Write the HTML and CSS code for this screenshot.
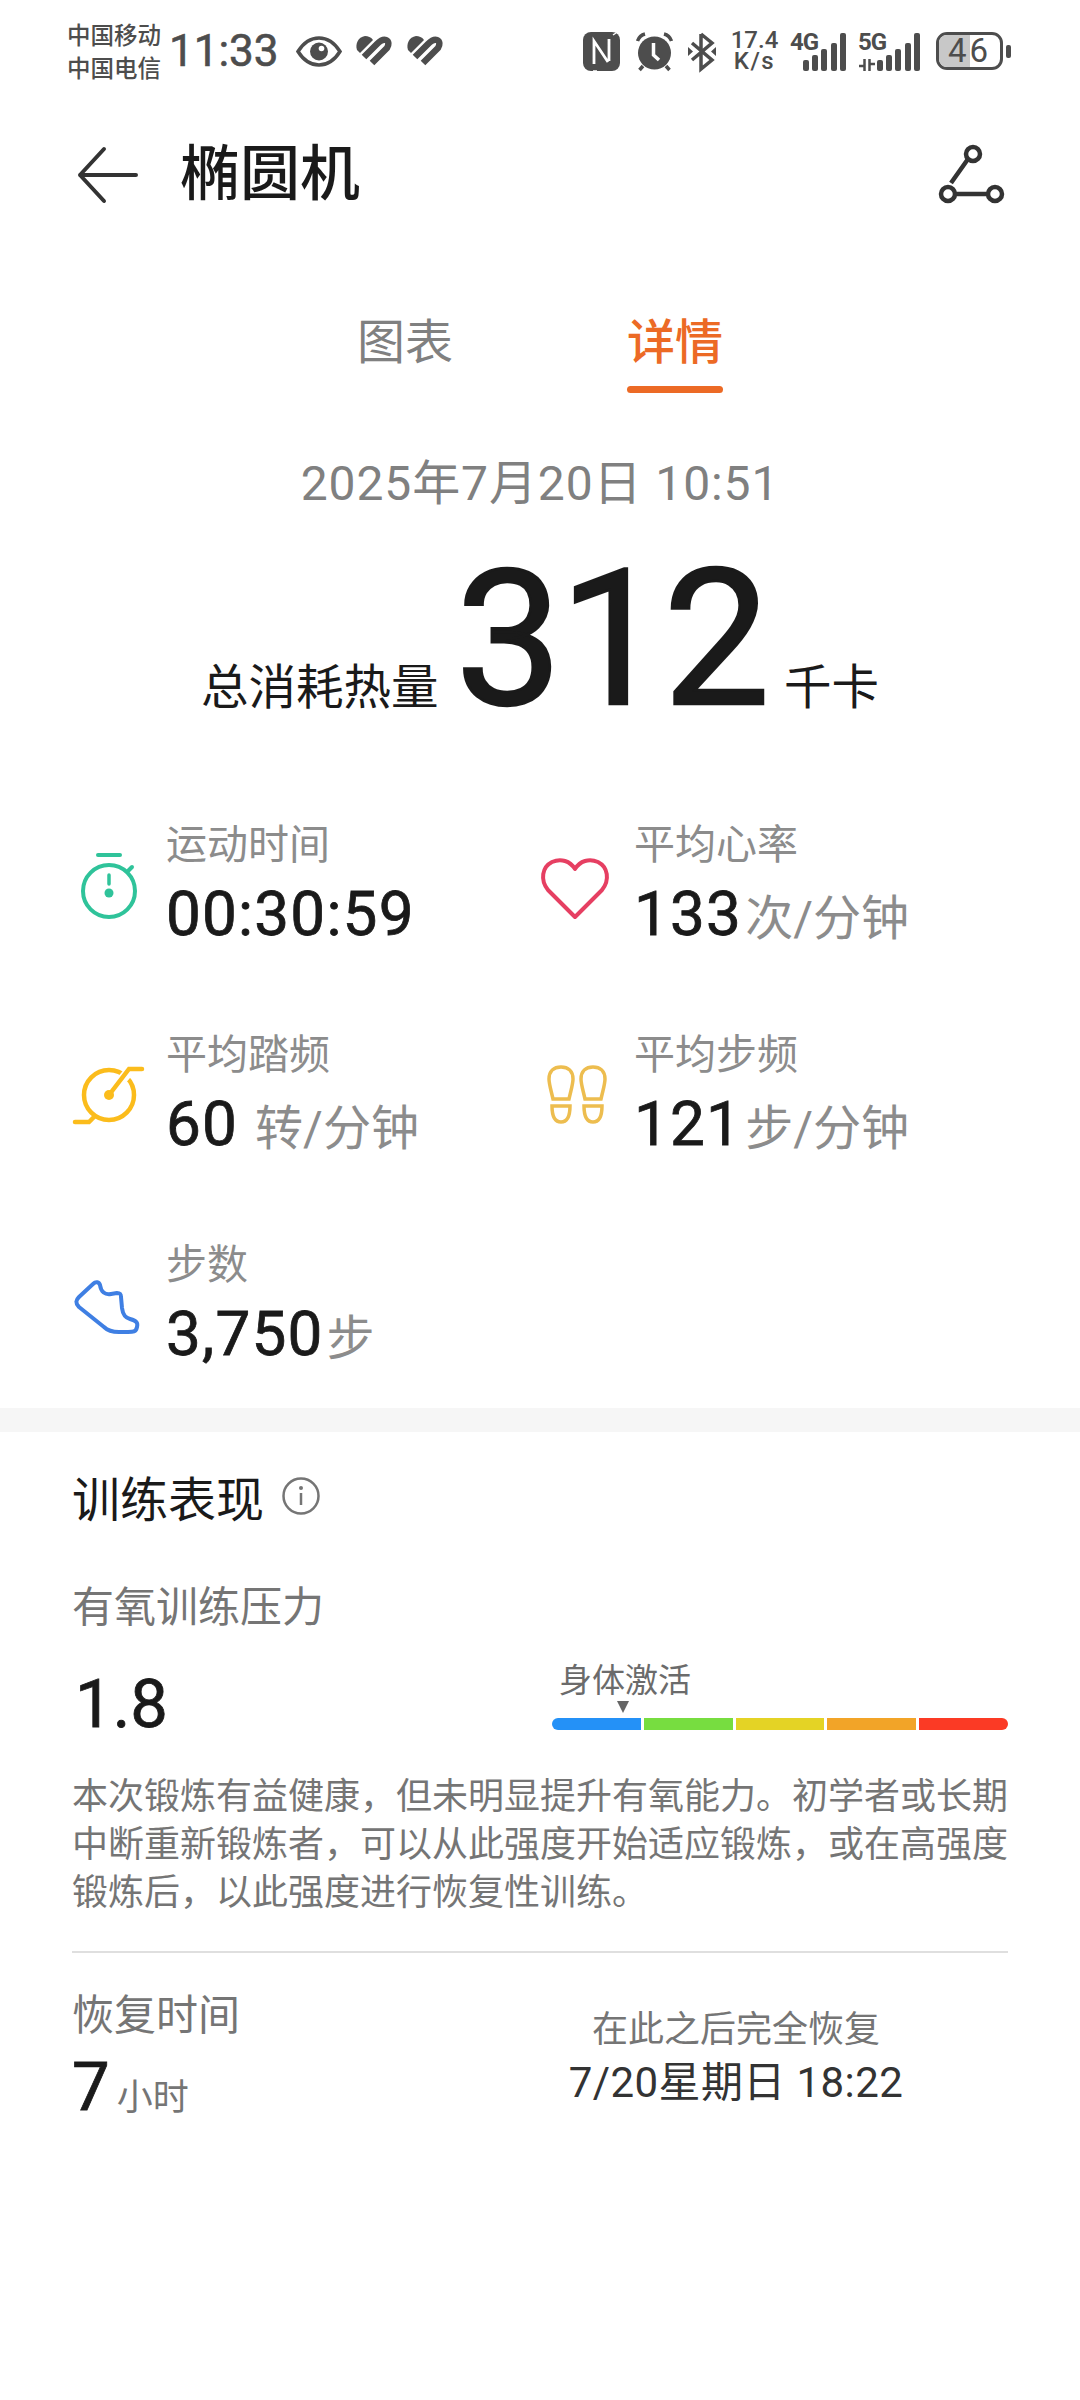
FILE: index.html
```html
<!DOCTYPE html>
<html lang="zh-CN">
<head>
    <meta charset="UTF-8">
    <meta name="viewport" content="width=device-width, initial-scale=1.0">
    <title>椭圆机</title>
    <link rel="stylesheet" href="styles.css">
</head>
<body>
    <div class="status-bar">
        <div class="status-left">
            <div class="carriers"><span>中国移动</span><span>中国电信</span></div>
            <span class="clock">11:33</span>
            <svg class="st-eye" viewBox="0 0 46 31"><path d="M2 15.500C8 6 14 2 23 2S38 6 44 15.500C38 25 32 29 23 29S8 25 2 15.500Z" fill="none" stroke="#4d4d4d" stroke-width="3.500"/><circle cx="23" cy="15.500" r="9" fill="#4d4d4d"/><circle cx="25.500" cy="12.500" r="2.800" fill="#fff"/></svg>
            <svg class="st-heart" viewBox="0 0 37 30"><path d="M1 14C-1 8 2 1 9 0C12 0 15 1 17 4L4 17Z" fill="#4d4d4d"/><path d="M8 21L21 8C24 5 27 3 30 4C33 5 33 9 31 12L16 27" fill="none" stroke="#4d4d4d" stroke-width="6.500"/></svg>
            <svg class="st-heart" viewBox="0 0 37 30"><path d="M1 14C-1 8 2 1 9 0C12 0 15 1 17 4L4 17Z" fill="#4d4d4d"/><path d="M8 21L21 8C24 5 27 3 30 4C33 5 33 9 31 12L16 27" fill="none" stroke="#4d4d4d" stroke-width="6.500"/></svg>
        </div>
        <div class="status-right">
            <svg class="st-nfc" viewBox="0 0 37 39"><rect width="37" height="39" rx="8" fill="#4d4d4d"/><path d="M11 32V9L25 30M26 7V29" fill="none" stroke="#fff" stroke-width="2.800"/><path d="M10 39H14M33 1L30 3" stroke="#fff" stroke-width="1.500"/></svg>
            <svg class="st-alarm" viewBox="0 0 37 39"><circle cx="18.500" cy="21" r="16.500" fill="#4d4d4d"/><path d="M1.500 9C3 5 5 3 9 2M35.500 9C34 5 32 3 28 2M7 34L3.500 38M30 34L33.500 38" fill="none" stroke="#4d4d4d" stroke-width="3.500"/><path d="M17.500 11V23L23 28" fill="none" stroke="#fff" stroke-width="3.500"/></svg>
            <svg class="st-bt" viewBox="0 0 28 39"><path d="M13 2V37L24 28L4 11M13 2L24 11L4 28" fill="none" stroke="#4d4d4d" stroke-width="3.500"/><path d="M0 15L5 19.500L0 24ZM28 15L23 19.500L28 24Z" fill="#4d4d4d"/></svg>
            <div class="speed"><span>17.4</span><span>K/s</span></div>
            <div class="signal">
                <span class="net">4G</span>
                <div class="bars"><i class="b1"></i><i class="b2"></i><i class="b3"></i><i class="b4"></i><i class="b5"></i></div>
            </div>
            <div class="signal five">
                <span class="net">5G</span>
                <svg class="arrows" viewBox="0 0 16 12"><path d="M5.500 0V12M0 7H5.500M10.500 0V12M10.500 5H16" fill="none" stroke="#4d4d4d" stroke-width="2.500"/></svg>
                <div class="bars"><i class="b1"></i><i class="b2"></i><i class="b3"></i><i class="b4"></i><i class="b5"></i></div>
            </div>
            <div class="battery"><div class="battery-body"><div class="battery-fill"></div><span>46</span></div><i class="battery-cap"></i></div>
        </div>
    </div>

    <div class="title-bar">
        <svg class="back" viewBox="0 0 60 56"><path d="M26 2L2 28L26 54M2 28H58" fill="none" stroke="#333" stroke-width="4" stroke-linecap="round" stroke-linejoin="round"/></svg>
        <h1>椭圆机</h1>
        <svg class="route" viewBox="0 0 66 60"><path d="M29 14L12 38M16 49H50" fill="none" stroke="#333" stroke-width="4.500"/><circle cx="34" cy="9" r="7" fill="none" stroke="#333" stroke-width="4.500"/><circle cx="9" cy="49" r="7" fill="none" stroke="#333" stroke-width="4.500"/><circle cx="56" cy="49" r="7" fill="none" stroke="#333" stroke-width="4.500"/></svg>
    </div>

    <div class="tabs">
        <div class="tab">图表</div>
        <div class="tab active">详情</div>
    </div>

    <div class="date">2025年7月20日 10:51</div>
    <div class="hero">
        <span class="hero-label">总消耗热量</span>
        <span class="hero-num">312</span>
        <span class="hero-label">千卡</span>
    </div>

    <div class="metrics">
        <div class="metric">
            <svg class="metric-icon" viewBox="0 0 70 70"><path d="M25 3H47" fill="none" stroke="#2fc39a" stroke-width="4" stroke-linecap="round"/><circle cx="36" cy="39" r="26" fill="none" stroke="#2fc39a" stroke-width="4"/><path d="M36 23V32" stroke="#2fc39a" stroke-width="3.500" stroke-linecap="round"/><circle cx="36" cy="41" r="4.500" fill="#2fc39a"/><path d="M55 19L59 15" stroke="#2fc39a" stroke-width="4" stroke-linecap="round"/></svg>
            <div>
                <div class="metric-label">运动时间</div>
                <div class="metric-value">00:30:59</div>
            </div>
        </div>
        <div class="metric">
            <svg class="metric-icon" viewBox="0 0 70 70"><path d="M34 65L7 38C-1 28 1 15 11 10C20 6 29 9 34 17C39 9 48 6 57 10C67 15 69 28 61 38Z" fill="none" stroke="#e63f62" stroke-width="4" stroke-linejoin="round"/></svg>
            <div>
                <div class="metric-label">平均心率</div>
                <div class="metric-value">133<span class="unit">次/分钟</span></div>
            </div>
        </div>
        <div class="metric">
            <svg class="metric-icon" viewBox="0 0 70 70"><circle cx="36" cy="33" r="25" fill="none" stroke="#fbbc1c" stroke-width="4.500"/><path d="M36 33L58 7M2 60H16" fill="none" stroke="#fff" stroke-width="10"/><path d="M36 33L56 7H69M2 60H16L21 55" fill="none" stroke="#fbbc1c" stroke-width="4.500" stroke-linecap="round"/><circle cx="36" cy="33" r="5" fill="#fbbc1c"/></svg>
            <div>
                <div class="metric-label">平均踏频</div>
                <div class="metric-value">60<span class="unit wide">转/分钟</span></div>
            </div>
        </div>
        <div class="metric">
            <svg class="metric-icon" viewBox="0 0 70 70"><g fill="none" stroke="#edbd4f" stroke-width="3.500"><path d="M12 37C10 28 8 22 8 17C8 9 13 5 20 5C27 5 32 9 32 17C32 22 30 28 28 37Z"/><path d="M11 44H29C29 54 26 60 20 60C14 60 11 54 11 44Z"/><path d="M44 37C42 28 40 22 40 17C40 9 45 5 52 5C59 5 64 9 64 17C64 22 62 28 60 37Z"/><path d="M43 44H61C61 54 58 60 52 60C46 60 43 54 43 44Z"/></g></svg>
            <div>
                <div class="metric-label">平均步频</div>
                <div class="metric-value">121<span class="unit">步/分钟</span></div>
            </div>
        </div>
        <div class="metric">
            <svg class="metric-icon" viewBox="0 0 70 70"><path d="M6 25L20 12C23 9 26 10 27 13C28 20 32 23 38 22L44 21C48 21 48 23 48 25L49 36C50 44 53 46 57 47C64 49 65 51 64 55C63 60 60 60 55 60H46C38 60 34 58 31 55L6 35C2 31 3 28 6 25Z" fill="none" stroke="#3f7fe3" stroke-width="4" stroke-linejoin="round"/></svg>
            <div>
                <div class="metric-label">步数</div>
                <div class="metric-value">3,750<span class="unit">步</span></div>
            </div>
        </div>
    </div>

    <div class="gap-band"></div>

    <div class="section">
        <div class="section-title">
            <h2>训练表现</h2>
            <svg class="info" viewBox="0 0 38 38"><circle cx="19" cy="19" r="17.500" fill="none" stroke="#757575" stroke-width="2.500"/><circle cx="19" cy="11" r="2" fill="#757575"/><path d="M19 16V28" stroke="#757575" stroke-width="2.500"/></svg>
        </div>
        <div class="sub-label">有氧训练压力</div>
        <div class="load-row">
            <div class="load-value">1.8</div>
            <div class="load-scale">
                <div class="scale-label">身体激活</div>
                <div class="scale-arrow"></div>
                <div class="scale-bar">
                    <i class="c-blue"></i><i class="c-green"></i><i class="c-yellow"></i><i class="c-orange"></i><i class="c-red"></i>
                </div>
            </div>
        </div>
        <p class="desc">本次锻炼有益健康，但未明显提升有氧能力。初学者或长期中断重新锻炼者，可以从此强度开始适应锻炼，或在高强度锻炼后，以此强度进行恢复性训练。</p>
        <div class="recovery">
            <div class="recovery-left">
                <div class="sub-label">恢复时间</div>
                <div class="recovery-value"><span class="load-value">7</span><span class="hours">小时</span></div>
            </div>
            <div class="recovery-right">
                <div class="recovery-note">在此之后完全恢复</div>
                <div class="recovery-time">7/20星期日 18:22</div>
            </div>
        </div>
    </div>
</body>
</html>
```

FILE: styles.css
```css
body {
    margin: 0;
    width: 1080px;
    height: 2400px;
    overflow: hidden;
    background: #fff;
    font-family: Roboto, "Noto Sans CJK SC", sans-serif;
    color: #1a1a1a;
}
h1, h2, p {
    margin: 0;
    font-weight: 400;
}
svg {
    display: block;
    flex: none;
    overflow: visible;
}

/* status bar */
.status-bar {
    height: 100px;
    box-sizing: border-box;
    padding: 20px 69px 0 67px;
    display: flex;
    justify-content: space-between;
    align-items: flex-start;
    color: #4d4d4d;
}
.status-left, .status-right {
    display: flex;
    align-items: center;
    height: 62px;
}
.carriers {
    display: flex;
    flex-direction: column;
    font-size: 23.500px;
    line-height: 33px;
    font-weight: 500;
    width: 96px;
    padding-top: 3px;
}
.clock {
    font-size: 44px;
    margin-left: 6px;
    width: 127px;
    -webkit-text-stroke: 0.600px #4d4d4d;
}
.st-eye { width: 46px; height: 31px; }
.st-heart { width: 37px; height: 30px; margin-left: 14px; }
.st-nfc { width: 37px; height: 39px; }
.st-alarm { width: 37px; height: 39px; margin-left: 16px; }
.st-bt { width: 28px; height: 39px; margin-left: 15px; }
.speed {
    display: flex;
    flex-direction: column;
    align-items: center;
    width: 49px;
    margin-left: 14px;
    font-size: 24px;
    line-height: 21px;
    font-weight: 500;
}
.speed span:last-child {
    letter-spacing: 1.500px;
}
.signal {
    position: relative;
    display: flex;
    align-items: flex-end;
    height: 39px;
    width: 56px;
    justify-content: flex-end;
    margin-left: 11px;
}
.signal.five {
    width: 62px;
    margin-left: 12px;
}
.net {
    position: absolute;
    left: 0;
    top: -2px;
    font-size: 24px;
    line-height: 24px;
    font-weight: 700;
    letter-spacing: -1px;
}
.arrows {
    position: absolute;
    left: 1px;
    bottom: 0;
    width: 16px;
    height: 12px;
}
.bars {
    display: flex;
    align-items: flex-end;
    gap: 3.300px;
}
.bars i {
    display: block;
    width: 6px;
    border-radius: 2px;
    background: #4d4d4d;
}
.bars .b1 { height: 11px; }
.bars .b2 { height: 16px; }
.bars .b3 { height: 22px; }
.bars .b4 { height: 28px; }
.bars .b5 { height: 38px; }
.battery {
    display: flex;
    align-items: center;
    margin-left: 16px;
}
.battery-body {
    position: relative;
    width: 67px;
    height: 38px;
    box-sizing: border-box;
    border: 3px solid #4d4d4d;
    border-radius: 11px;
    overflow: hidden;
    text-align: center;
}
.battery-fill {
    position: absolute;
    left: 0;
    top: 0;
    bottom: 0;
    width: 50%;
    background: #c8c8c8;
}
.battery-body span {
    position: relative;
    display: block;
    font-size: 33px;
    line-height: 32px;
    letter-spacing: 3px;
}
.battery-cap {
    display: block;
    width: 5px;
    height: 13px;
    margin-left: 3px;
    border-radius: 2px;
    background: #4d4d4d;
}

/* title */
.title-bar {
    height: 150px;
    display: flex;
    align-items: center;
    padding: 0 32px 0 78px;
}
.back { width: 60px; height: 56px; }
.title-bar h1 {
    margin: 0 0 14px 42px;
    font-size: 60px;
    font-weight: 500;
    flex: 1;
}
.route { width: 66px; height: 60px; margin-right: 43px; }

/* tabs */
.tabs {
    display: flex;
    justify-content: center;
    gap: 174px;
    height: 143px;
}
.tab {
    font-size: 48px;
    line-height: 60px;
    padding-top: 63px;
    color: #808080;
    position: relative;
    height: 80px;
}
.tab.active {
    color: #ec6a25;
    font-weight: 500;
}
.tab.active::after {
    content: "";
    position: absolute;
    left: 0;
    right: 0;
    bottom: 0;
    height: 7px;
    border-radius: 4px;
    background: #ec6a25;
}

/* summary */
.date {
    text-align: center;
    font-size: 48px;
    line-height: 60px;
    letter-spacing: 0.900px;
    color: #808080;
    padding-top: 61px;
}
.hero {
    display: flex;
    justify-content: center;
    align-items: baseline;
    height: 238px;
    padding-top: 30px;
}
.hero-num {
    font-size: 190px;
    line-height: 190px;
    letter-spacing: -3px;
    margin: 0 17px;
    -webkit-text-stroke: 2.500px #1a1a1a;
}
.hero-label {
    font-size: 47.500px;
}

/* metrics */
.metrics {
    display: grid;
    grid-template-columns: 468px 1fr;
    grid-auto-rows: 210px;
    padding-left: 73px;
    height: 626px;
}
.metric {
    display: flex;
    align-items: center;
    gap: 23px;
}
.metric-icon {
    width: 70px;
    height: 70px;
    margin-top: 0;
}
.metric-label {
    font-size: 41px;
    line-height: 50px;
    color: #8c8c8c;
}
.metric-value {
    height: 80px;
    font-size: 62px;
    line-height: 80px;
    margin-top: 4px;
    letter-spacing: 1.200px;
    -webkit-text-stroke: 0.800px #1a1a1a;
}
.unit {
    font-size: 48px;
    color: #8c8c8c;
    margin-left: 3px;
    letter-spacing: 0;
    -webkit-text-stroke: 0;
}
.unit.wide {
    margin-left: 17px;
}

.gap-band {
    height: 24px;
    background: #f6f6f6;
}

/* training */
.section {
    padding: 0 72px;
}
.section-title {
    display: flex;
    align-items: center;
    gap: 18px;
    height: 128px;
}
.section-title h2 {
    font-size: 48px;
}
.info { width: 38px; height: 38px; }
.sub-label {
    font-size: 42px;
    line-height: 50px;
    color: #757575;
}
.section-title + .sub-label {
    margin-top: 23px;
}
.load-row {
    display: flex;
    justify-content: space-between;
    align-items: flex-end;
    height: 111px;
}
.load-row > .load-value {
    margin-left: 3px;
}
.load-value {
    font-size: 67px;
    line-height: 80px;
    -webkit-text-stroke: 0.800px #1a1a1a;
}
.load-scale {
    width: 456px;
}
.scale-label {
    font-size: 33px;
    line-height: 40px;
    color: #6b6b6b;
    padding-left: 7px;
}
.scale-arrow {
    width: 0;
    height: 0;
    margin: 0 0 5px 65px;
    border-left: 6px solid transparent;
    border-right: 6px solid transparent;
    border-top: 12px solid #666;
}
.scale-bar {
    display: flex;
    gap: 3px;
    height: 12px;
    border-radius: 6px;
    overflow: hidden;
    margin-bottom: 14px;
}
.scale-bar i {
    flex: 1;
}
.c-blue { background: #2491f7; }
.c-green { background: #77dd40; }
.c-yellow { background: #e4d325; }
.c-orange { background: #f2a428; }
.c-red { background: #fb3a25; }
.desc {
    font-size: 36px;
    line-height: 48px;
    color: #757575;
    margin-top: 29px;
    padding-bottom: 34px;
    border-bottom: 2px solid #dfdfdf;
}
.recovery {
    display: flex;
    margin-top: 38px;
}
.recovery-left {
    width: 449px;
}
.recovery-value {
    display: flex;
    align-items: baseline;
    margin-top: 6px;
}
.hours {
    font-size: 36px;
    color: #757575;
    margin-left: 7px;
}
.recovery-right {
    width: 430px;
    text-align: center;
    padding-top: 14px;
}
.recovery-note {
    font-size: 36px;
    line-height: 50px;
    color: #757575;
}
.recovery-time {
    font-size: 42px;
    line-height: 56px;
    letter-spacing: 0.400px;
    color: #333;
}
```
